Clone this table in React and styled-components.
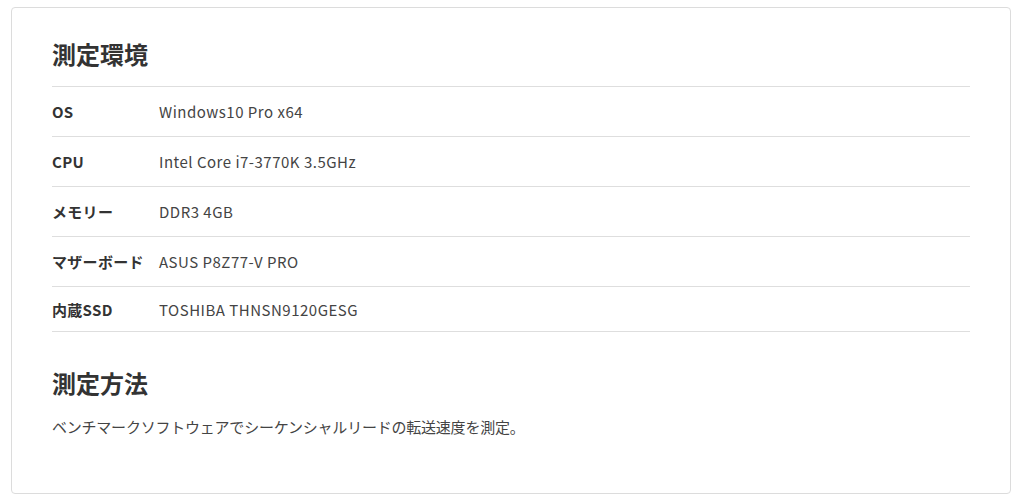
import React from "react";
import styled, { createGlobalStyle } from "styled-components";

const Global = createGlobalStyle`
  html, body { margin: 0; padding: 0; background: #fff; }
  body { font-family: "Noto Sans CJK JP", "Noto Sans", sans-serif; color: #333; }
`;

const Page = styled.div`
  padding: 7px 10px 7px 11px;
`;

const Card = styled.section`
  border: 1px solid #dcdcdc;
  border-radius: 4px;
  padding: 26px 40px 50px 40px;
  box-sizing: border-box;
  height: 487px;
`;

const Heading = styled.h2`
  margin: 0;
  font-size: 24px;
  font-weight: 700;
  line-height: 40px;
  color: #333;
  padding-bottom: 12px;
`;

const SpecTable = styled.div`
  display: flex;
  flex-direction: column;
  border-top: 1px solid #dedede;
  margin-bottom: 31px;
`;

const Row = styled.div`
  display: grid;
  grid-template-columns: 107px 1fr;
  align-items: center;
  height: 49px;
  border-bottom: 1px solid #dedede;
  &:last-child { height: 44px; }
`;

const Label = styled.div`
  font-size: 15px;
  font-weight: 700;
  letter-spacing: 0.3px;
  color: #333;
`;

const Value = styled.div`
  font-size: 15px;
  letter-spacing: 0.5px;
  color: #444;
`;

const Text = styled.p`
  margin: 0;
  font-size: 15px;
  letter-spacing: -0.22px;
  color: #444;
  line-height: 24px;
  padding-top: 0;
`;

const specs = [
  ["OS", "Windows10 Pro x64"],
  ["CPU", "Intel Core i7-3770K 3.5GHz"],
  ["メモリー", "DDR3 4GB"],
  ["マザーボード", "ASUS P8Z77-V PRO"],
  ["内蔵SSD", "TOSHIBA THNSN9120GESG"],
];

export default function App() {
  return (
    <>
      <Global />
      <Page>
        <Card>
          <Heading>測定環境</Heading>
          <SpecTable>
            {specs.map(([k, v]) => (
              <Row key={k}>
                <Label>{k}</Label>
                <Value>{v}</Value>
              </Row>
            ))}
          </SpecTable>
          <Heading>測定方法</Heading>
          <Text>ベンチマークソフトウェアでシーケンシャルリードの転送速度を測定。</Text>
        </Card>
      </Page>
    </>
  );
}
